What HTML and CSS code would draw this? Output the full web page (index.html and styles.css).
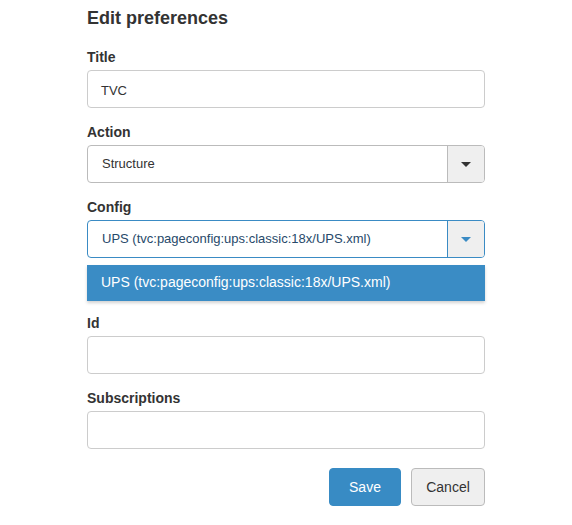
FILE: index.html
```html
<!DOCTYPE html>
<html>
<head>
<meta charset="utf-8">
<link rel="stylesheet" href="styles.css">
</head>
<body>
<div class="panel">
  <h2 class="heading">Edit preferences</h2>
  <div class="group">
    <div class="label">Title</div>
    <div class="input">TVC</div>
  </div>
  <div class="group">
    <div class="label">Action</div>
    <div class="select">
      <div class="select-value">Structure</div>
      <div class="select-btn"><span class="caret"></span></div>
    </div>
  </div>
  <div class="group">
    <div class="label">Config</div>
    <div class="select focused">
      <div class="select-value">UPS (tvc:pageconfig:ups:classic:18x/UPS.xml)</div>
      <div class="select-btn"><span class="caret"></span></div>
    </div>
    <div class="menu">
      <div class="menu-item">UPS (tvc:pageconfig:ups:classic:18x/UPS.xml)</div>
    </div>
  </div>
  <div class="group">
    <div class="label">Id</div>
    <div class="input"></div>
  </div>
  <div class="group">
    <div class="label">Subscriptions</div>
    <div class="input"></div>
  </div>
  <div class="actions">
    <button class="btn btn-primary">Save</button>
    <button class="btn btn-default">Cancel</button>
  </div>
</div>
</body>
</html>
```
FILE: styles.css
```css
html, body {
  margin: 0;
  padding: 0;
  background: #fff;
}
body {
  font-family: "Liberation Sans", Arial, sans-serif;
  color: #333;
}
.panel {
  width: 398px;
  margin-left: 87px;
  padding-top: 6px;
}
.heading {
  margin: 0 0 16px 0;
  font-size: 18px;
  line-height: 24px;
  font-weight: bold;
  color: #333;
}
.group {
  margin-bottom: 13px;
}
.label {
  font-size: 14px;
  line-height: 20px;
  font-weight: bold;
  color: #333;
  padding-top: 1px;
  margin-bottom: 3px;
}
.input {
  box-sizing: border-box;
  height: 38px;
  border: 1px solid #ccc;
  border-radius: 4px;
  padding: 0 13px;
  font-size: 13px;
  line-height: 37px;
  color: #333;
  padding-top: 1px;
}
.select {
  box-sizing: border-box;
  height: 38px;
  border: 1px solid #bbb;
  border-radius: 4px;
  display: flex;
  overflow: hidden;
}
.select.focused {
  border-color: #3a8bc4;
}
.select-value {
  flex: 1;
  padding: 0 14px;
  font-size: 13px;
  line-height: 36px;
  color: #333;
}
.focused .select-value {
  color: #27496a;
}
.select-btn {
  width: 36px;
  background: #efefef;
  border-left: 1px solid #bbb;
  display: flex;
  align-items: center;
  justify-content: center;
}
.focused .select-btn {
  border-left-color: #3a8bc4;
}
.caret {
  width: 0;
  height: 0;
  border-left: 5px solid transparent;
  border-right: 5px solid transparent;
  border-top: 5px solid #333;
}
.focused .caret {
  border-top-color: #3a8bc4;
}
.menu {
  margin-top: 7px;
  margin-bottom: -2px;
  background: #3a8cc5;
  box-shadow: 0 2px 3px rgba(0, 0, 0, 0.18);
}
.menu-item {
  height: 36px;
  padding: 0 14px;
  font-size: 14px;
  line-height: 34px;
  color: #fff;
}
.actions {
  display: flex;
  justify-content: flex-end;
  gap: 10px;
  margin-top: 19px;
}
.btn {
  box-sizing: border-box;
  height: 38px;
  font-family: "Liberation Sans", Arial, sans-serif;
  font-size: 14px;
  border-radius: 4px;
  padding: 0;
  margin: 0;
}
.btn-primary {
  width: 72px;
  background: #388bc4;
  border: 1px solid #388bc4;
  color: #fff;
}
.btn-default {
  width: 74px;
  background: #efefef;
  border: 1px solid #bbb;
  color: #333;
}
```
